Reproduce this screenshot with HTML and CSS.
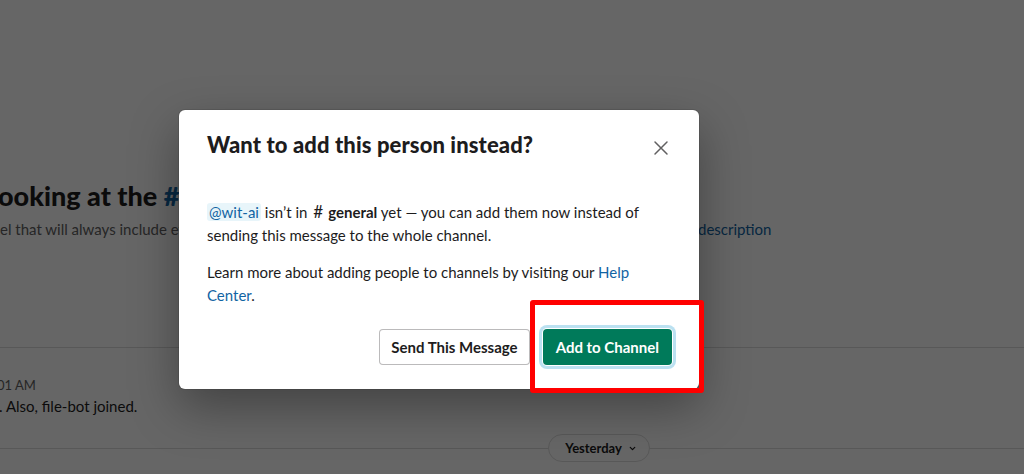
FILE: index.html
```html
<!DOCTYPE html>
<html lang="en">
<head>
<meta charset="utf-8">
<title>Want to add this person instead?</title>
<link rel="stylesheet" href="styles.css">
</head>
<body>
<div class="page">
  <section class="intro">
    <h1 class="intro-title"><span class="cut-l">l</span>ooking at the <span class="chan">#general</span> channel</h1>
    <div class="intro-desc">
      <span class="desc-text"><span class="cut-c">n</span>el that will always include everyone. It’s a great spot for announcements</span>
      <span class="desc-link">description</span>
    </div>
  </section>
  <section class="messages">
    <div class="msg-time">01 AM</div>
    <div class="msg-text">. Also, file-bot joined.</div>
    <div class="day-divider">
      <button class="day-pill">Yesterday <svg class="chev" viewBox="0 0 10 10" width="9" height="9"><path d="M2.5 3.8 5 6.2 7.5 3.8" fill="none" stroke="currentColor" stroke-width="1.4" stroke-linecap="round" stroke-linejoin="round"/></svg></button>
    </div>
  </section>

  <div class="overlay"></div>

  <div class="modal" role="dialog">
    <div class="modal-header">
      <h2 class="modal-title">Want to add this person instead?</h2>
      <button class="close" aria-label="Close">
        <svg viewBox="0 0 20 20" width="20" height="20"><path d="M4 4 16 16M16 4 4 16" stroke="currentColor" stroke-width="1.5" stroke-linecap="round"/></svg>
      </button>
    </div>
    <div class="modal-body">
      <p><span class="mention">@wit-ai</span> isn’t in <span class="hash">#</span><b>general</b> yet — you can add them now instead of sending this message to the whole channel.</p>
      <p>Learn more about adding people to channels by visiting our <a class="link">Help Center</a>.</p>
    </div>
    <div class="modal-footer">
      <button class="btn btn-outline">Send This Message</button>
      <button class="btn btn-primary">Add to Channel</button>
    </div>
  </div>

  <div class="annotation"></div>
</div>
</body>
</html>
```

FILE: styles.css
```css
* { box-sizing: border-box; }
html, body { margin: 0; padding: 0; }
body {
  font-family: Lato, "Noto Sans", "Liberation Sans", sans-serif;
  color: #1d1c1d;
  background: #fff;
}
.page {
  position: relative;
  width: 1024px;
  height: 474px;
  overflow: hidden;
}

/* background page */
.intro { padding-top: 178px; }
.intro-title {
  margin: 0 0 0 -9px;
  font-size: 27px;
  line-height: 36px;
  font-weight: 900;
  white-space: nowrap;
}
.cut-l { display: inline-block; width: 7px; overflow: hidden; vertical-align: bottom; }
.chan { color: #1264a3; }
.intro-desc {
  display: flex;
  margin-top: 4px;
  font-size: 15px;
  line-height: 22px;
  white-space: nowrap;
  color: #616061;
}
.desc-text { flex: 0 0 698px; overflow: hidden; margin-left: -8px; }
.cut-c { display: inline-block; width: 8px; overflow: hidden; vertical-align: bottom; }
.desc-link { color: #1264a3; margin-left: 8px; }

.messages {
  margin-top: 107px;
  border-top: 1px solid #dddddd;
  padding-top: 28px;
}
.msg-time {
  margin-left: -3px;
  font-size: 13px;
  line-height: 18px;
  color: #616061;
  white-space: nowrap;
}
.msg-text {
  font-size: 15px;
  line-height: 22px;
  margin-top: 1px;
  margin-left: -1px;
  white-space: nowrap;
}
.day-divider {
  position: relative;
  margin-top: 17px;
  height: 28px;
  display: flex;
  justify-content: center;
  padding-left: 174px;
}
.day-divider::before {
  content: "";
  position: absolute;
  left: 0; right: 0; top: 14px;
  border-top: 1px solid #dddddd;
}
.day-pill {
  position: relative;
  height: 28px;
  padding: 0 12px 0 16px;
  border: 1px solid #dddddd;
  border-radius: 24px;
  background: #fff;
  font-family: inherit;
  font-weight: 700;
  font-size: 13px;
  color: #1d1c1d;
  display: flex;
  align-items: center;
  gap: 6px;
}
.chev { margin-top: 1px; }

.overlay {
  position: absolute;
  inset: 0;
  background: rgba(0, 0, 0, 0.6);
}

/* modal */
.modal {
  position: absolute;
  left: 179px;
  top: 110px;
  width: 520px;
  height: 279px;
  background: #fff;
  border-radius: 6px;
  box-shadow: 0 0 0 1px rgba(29,28,29,.13), 0 18px 48px 0 rgba(0,0,0,.35);
  display: flex;
  flex-direction: column;
}
.modal-header {
  display: flex;
  align-items: center;
  justify-content: space-between;
  padding: 20px 20px 0 28px;
  height: 50px;
}
.modal-title {
  margin: 0;
  font-size: 22px;
  line-height: 30px;
  font-weight: 900;
  letter-spacing: 0.1px;
  color: #1d1c1d;
}
.close {
  width: 36px;
  height: 36px;
  margin-top: 6px;
  border: 0;
  background: none;
  color: #616061;
  display: flex;
  align-items: center;
  justify-content: center;
  padding: 0;
}
.modal-body {
  padding: 40px 28px 0;
  font-size: 15px;
  line-height: 23px;
}
.modal-body p { margin: 0 0 14px; }
.modal-body p:last-child { margin-bottom: 0; }
.mention {
  color: #1264a3;
  background: rgba(29,155,209,.1);
  border-radius: 3px;
  padding: 0 2px;
}
.link { color: #1264a3; }
.hash {
  display: inline-block;
  font-size: 17px;
  width: 14px;
  margin-left: 2px;
  margin-right: 1px;
}
.modal-footer {
  margin-top: auto;
  display: flex;
  justify-content: flex-end;
  gap: 13px;
  padding: 0 27px 24px;
}
.btn {
  height: 36px;
  padding: 0 12px;
  border-radius: 4px;
  font-family: inherit;
  font-size: 15px;
  font-weight: 700;
}
.btn-outline {
  border: 1px solid rgba(29,28,29,.3);
  padding: 0 11px;
  background: #fff;
  color: #1d1c1d;
}
.btn-primary {
  border: 0;
  padding: 0 13px;
  background: #007a5a;
  color: #fff;
  box-shadow: 0 0 0 1px #fff, 0 0 0 4px rgba(29,155,209,.3);
}

/* red annotation box from screenshot */
.annotation {
  position: absolute;
  left: 530px;
  top: 300px;
  width: 174px;
  height: 93px;
  border: 5px solid #ff0000;
  border-radius: 3px;
}
```
